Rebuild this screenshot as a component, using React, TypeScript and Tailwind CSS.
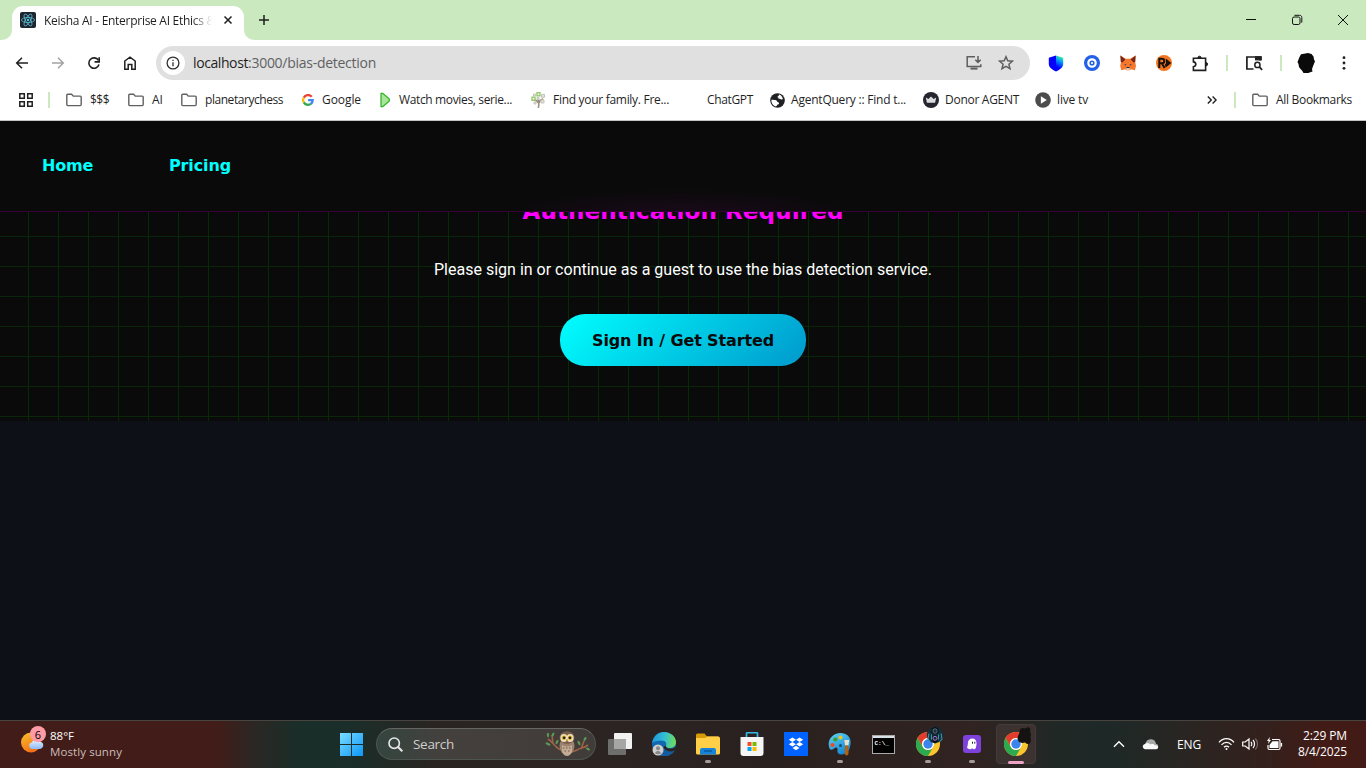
import { useLayoutEffect, useRef, type ReactNode } from "react";

const uiFont = "font-['Open_Sans','Noto_Sans',sans-serif]";
const wideFont = "font-['DejaVu_Sans',sans-serif] font-bold";

/** Text that spreads its letters so that the line is exactly `width` pixels wide. */
function FitText({ width, className = "", children }: { width: number; className?: string; children: ReactNode }) {
  const ref = useRef<HTMLSpanElement>(null);
  useLayoutEffect(() => {
    const el = ref.current;
    if (!el) return;
    el.style.letterSpacing = "0px";
    const natural = el.getBoundingClientRect().width;
    const count = (el.textContent ?? "").length || 1;
    el.style.letterSpacing = `${(width - natural) / count}px`;
  }, [width, children]);
  return (
    <span ref={ref} className={`shrink-0 whitespace-nowrap ${className}`}>
      {children}
    </span>
  );
}

function ReactMark() {
  return (
    <svg width="16" height="16" viewBox="0 0 16 16" className="shrink-0">
      <rect width="16" height="16" rx="2" fill="#20242c" />
      <g fill="none" stroke="#58c4dc" strokeWidth=".75">
        <ellipse cx="8" cy="8" rx="6.6" ry="2.5" />
        <ellipse cx="8" cy="8" rx="6.6" ry="2.5" transform="rotate(60 8 8)" />
        <ellipse cx="8" cy="8" rx="6.6" ry="2.5" transform="rotate(120 8 8)" />
      </g>
      <circle cx="8" cy="8" r="1.2" fill="#58c4dc" />
    </svg>
  );
}

function TabStrip() {
  return (
    <div className="flex h-10 bg-[#cae9bf]">
      <div className="flex w-3 items-end bg-white">
        <div className="h-full w-3 rounded-br-[10px] bg-[#cae9bf]" />
      </div>
      <div className="flex w-[232px] flex-col bg-[#cae9bf]">
        <div className="mt-1.5 flex h-[34px] items-center rounded-t-[11px] bg-white pb-1.5 pl-2">
          <ReactMark />
          <div className="ml-2 mt-px w-[172px] overflow-hidden whitespace-nowrap text-[12px] leading-4 text-[#1f1f1f] [mask-image:linear-gradient(to_right,black_148px,transparent_168px)]">
            <FitText width={171}>Keisha AI - Enterprise AI Ethics &amp;</FitText>
          </div>
          <svg width="10" height="10" viewBox="0 0 10 10" className="ml-[7px]" stroke="#1f1f1f" strokeWidth="1.5">
            <path d="M1.5 1.5l7 7M8.5 1.5l-7 7" />
          </svg>
        </div>
      </div>
      <div className="w-[10px] bg-white">
        <div className="h-full w-full rounded-bl-[10px] bg-[#cae9bf]" />
      </div>
      <svg width="12" height="12" viewBox="0 0 12 12" className="ml-1 mt-3.5" stroke="#1f1f1f" strokeWidth="1.5">
        <path d="M6 1v10M1 6h10" />
      </svg>
      <div className="ml-auto flex items-center">
        <div className="flex w-[46px] justify-center">
          <svg width="12" height="12" viewBox="0 0 12 12" stroke="#111" fill="none">
            <path d="M1 5.5h10" />
          </svg>
        </div>
        <div className="flex w-[46px] justify-center">
          <svg width="12" height="12" viewBox="0 0 12 12" stroke="#111" fill="none">
            <rect x="1.5" y="3" width="7.5" height="7.500" rx="1.6" />
            <path d="M3.400 1.300h5.200c1.300 0 2.200.9 2.200 2.200v5.200" />
          </svg>
        </div>
        <div className="flex w-[46px] justify-center">
          <svg width="12" height="12" viewBox="0 0 12 12" stroke="#111" fill="none">
            <path d="M1 1l10 10M11 1L1 11" />
          </svg>
        </div>
      </div>
    </div>
  );
}

function Slot({ className = "w-9", children }: { className?: string; children: ReactNode }) {
  return <div className={`flex shrink-0 items-center justify-center ${className}`}>{children}</div>;
}

function Toolbar() {
  return (
    <div className="flex h-[46px] items-center pl-1">
      <Slot>
        <svg width="14" height="14" viewBox="0 0 14 14" fill="none" stroke="#1f1f1f" strokeWidth="1.5">
          <path d="M13 7H2M7 1.700L1.700 7 7 12.300" />
        </svg>
      </Slot>
      <Slot>
        <svg width="14" height="14" viewBox="0 0 14 14" fill="none" stroke="#a3a3a3" strokeWidth="1.5">
          <path d="M1 7h11M7 1.700L12.300 7 7 12.300" />
        </svg>
      </Slot>
      <Slot>
        <svg width="14" height="14" viewBox="0 0 14 14" fill="none" stroke="#1f1f1f" strokeWidth="1.600">
          <path d="M12 8.600A5.200 5.200 0 1 1 11.400 4.200" />
          <path d="M12.200 1.200v4.700H7.600" />
        </svg>
      </Slot>
      <Slot>
        <svg width="14" height="16" viewBox="0 0 14 16" fill="none" stroke="#1f1f1f" strokeWidth="1.500">
          <path d="M1.800 6L7 2.100 12.200 6v8.200H8.800V9.500H5.200v4.700H1.800z" />
        </svg>
      </Slot>
      <div className="ml-2 flex h-[34px] w-[874px] items-center rounded-full bg-[#e0e0e0] pl-[5px]">
        <div className="flex size-6 items-center justify-center rounded-full bg-white">
          <svg width="14" height="14" viewBox="0 0 14 14" fill="none" stroke="#303030" strokeWidth="1.300">
            <circle cx="7" cy="7" r="5.900" />
            <path d="M7 6.300v4M7 3.700v1.400" />
          </svg>
        </div>
        <div className="ml-2 flex text-[14px] leading-5">
          <FitText width={55} className="text-[#1f1f1f]">localhost</FitText>
          <FitText width={128} className="text-[#5f6063]">:3000/bias-detection</FitText>
        </div>
        <svg width="16" height="16" viewBox="0 0 16 16" className="ml-auto" fill="none" stroke="#5e5e5e" strokeWidth="1.500">
          <path d="M9 1.800H1.200v9.700h13.600V9.300M12 1v6.200M9.300 4.700L12 7.400l2.700-2.700" />
          <path d="M4.500 13.600h7" strokeWidth="2" />
        </svg>
        <svg width="16" height="16" viewBox="0 0 16 16" className="ml-4 mr-4" fill="none" stroke="#5e5e5e" strokeWidth="1.500">
          <path d="M8 1.700l1.800 4.100 4.600.4-3.500 3 1.100 4.500L8 11.300l-4 2.400 1.100-4.500-3.500-3 4.600-.4z" />
        </svg>
      </div>
      <Slot className="ml-2 w-9 pr-px">
        <svg width="16" height="17" viewBox="0 0 16 17">
          <linearGradient id="shield" gradientUnits="userSpaceOnUse" x1="15" y1="1" x2="8" y2="15">
            <stop offset=".05" stopColor="#48ff91" />
            <stop offset=".4" stopColor="#0094ff" />
            <stop offset=".8" stopColor="#0500ff" />
          </linearGradient>
          <path d="M8 .5L.8 2.800v6c0 3.500 3 5.800 7.200 7.700z" fill="#0500ff" />
          <path d="M8 .5l7.200 2.300v6c0 3.500-3 5.800-7.200 7.700z" fill="url(#shield)" />
        </svg>
      </Slot>
      <Slot>
        <svg width="16" height="16" viewBox="0 0 16 16">
          <circle cx="8" cy="8" r="8" fill="#2360e8" />
          <circle cx="8" cy="8" r="3.700" fill="#2360e8" stroke="#fff" strokeWidth="2.200" />
          <circle cx="8" cy="8" r="1.100" fill="#fff" />
        </svg>
      </Slot>
      <Slot>
        <svg width="16" height="16" viewBox="0 0 16 16">
          <path d="M.4.500l5.400 3.200h4.400L15.600.500l-.4 6.500.8 4-1.100 4.300-4-1-1.200 1H6.500l-1.200-1-4 1L.2 11 1 7z" fill="#f5782c" />
          <path d="M.4.500l5 4.100-3 3-1.600-.6zM15.600.500l-5 4.100 3 3 1.600-.6z" fill="#76261a" />
          <path d="M4 9l2.300.4-.4 1.300zM12 9l-2.300.4.4 1.300z" fill="#24335a" />
          <path d="M6 12.300h4l-.5 2.700h-3z" fill="#d8c8bb" />
          <path d="M6.400 12h3.200v1H6.400z" fill="#30211d" />
        </svg>
      </Slot>
      <Slot>
        <svg width="16" height="16" viewBox="0 0 16 16">
          <circle cx="8" cy="8" r="8" fill="#f3761f" />
          <path d="M3.300 13V3.800h2.500c3.300 0 3.300 4.300.2 4.500H4M6 8.500L8.600 13" fill="none" stroke="#17110d" strokeWidth="2" />
          <path d="M9.800 3.500L15.300 8l-5.500 4.500-1-2.700 1.300-1.600z" fill="#17110d" />
        </svg>
      </Slot>
      <Slot>
        <svg width="17" height="17" viewBox="0 0 17 17" fill="none" stroke="#1f1f1f" strokeWidth="1.600">
          <path d="M1.400 3.200h12.200v12.200H1.400v-3.700c3.200-.4 3.200-4.400 0-4.800z" />
          <path d="M5.900 2.800a1.600 1.600 0 0 1 3.200 0zM14 7.600a1.600 1.600 0 0 1 0 3.200z" fill="#1f1f1f" strokeWidth="1" />
        </svg>
      </Slot>
      <div className="ml-2 h-4 w-0.5 bg-[#cae9bf]" />
      <Slot className="ml-2 w-9">
        <svg width="18" height="16" viewBox="0 0 18 16" fill="none" stroke="#1f1f1f" strokeWidth="1.700">
          <path d="M8.500 14H1.900V2h13.200v3.500" />
          <path d="M10 1.200h6.900v4.200H10z" fill="#1f1f1f" stroke="none" />
          <circle cx="12.400" cy="9.900" r="2.600" strokeWidth="1.500" />
          <path d="M14.300 11.800l2.800 3" />
        </svg>
      </Slot>
      <div className="ml-2 h-4 w-0.5 bg-[#cae9bf]" />
      <Slot className="ml-1.5 w-9">
        <svg width="18" height="20" viewBox="0 0 18 20">
          <path d="M2.500 4L4 1.200 7 .8l4-.8 3.500 1 2 2.500.5 3 1 1.700-1 2.500-1.200 3-.8 2.500.5 2.300-3 1-1 .5H6.500L5 17.500 3.500 16 2 14l-.5-3L.5 9l.8-2z" fill="#0b0a0b" />
        </svg>
      </Slot>
      <Slot className="ml-0.5 w-9">
        <svg width="4" height="16" viewBox="0 0 4 16" fill="#1f1f1f">
          <circle cx="2" cy="2.700" r="1.400" />
          <circle cx="2" cy="8" r="1.400" />
          <circle cx="2" cy="13.300" r="1.400" />
        </svg>
      </Slot>
    </div>
  );
}

function FolderIcon() {
  return (
    <svg width="16" height="14" viewBox="0 0 16 14" className="shrink-0" fill="none" stroke="#606060" strokeWidth="1.400">
      <path d="M.8 11.600V2.200q0-1 1-1h3.800l1.700 1.900h6.900q1 0 1 1v7.500q0 1-1 1H1.800q-1 0-1-1z" />
    </svg>
  );
}

function GoogleIcon() {
  return (
    <svg width="12" height="12" viewBox="0 0 12 12" className="shrink-0" fill="none" strokeWidth="2.300">
      <path d="M9.700 2.700A4.850 4.850 0 0 0 1.800 3.600" stroke="#ea4335" />
      <path d="M1.800 3.600a4.850 4.850 0 0 0 0 4.800" stroke="#fbbc05" />
      <path d="M1.800 8.400a4.850 4.850 0 0 0 7.300 1.300" stroke="#34a853" />
      <path d="M9 9.800c1.200-1 1.700-2.200 1.700-3.700H6.100" stroke="#4285f4" />
    </svg>
  );
}

function BookmarkBar() {
  return (
    <div className="flex h-[34px] items-center border-b border-[#c4c4c4] pb-[7px] pl-[19px] text-[12px] leading-4 text-[#1f1f1f]">
      <svg width="14" height="14" viewBox="0 0 14 14" fill="none" stroke="#1f1f1f" strokeWidth="1.500">
        <path d="M.8.8h4.500v4.500H.8zM8.700.8h4.500v4.500H8.700zM.8 8.700h4.500v4.500H.8zM8.700 8.700h4.500v4.500H8.700z" />
      </svg>
      <div className="ml-[15px] h-4 w-0.5 bg-[#cae9bf]" />
      <div className="ml-4 flex items-center gap-2">
        <FolderIcon />
        <FitText width={19}>$$$</FitText>
      </div>
      <div className="ml-[19px] flex items-center gap-2">
        <FolderIcon />
        <FitText width={11}>AI</FitText>
      </div>
      <div className="ml-[18px] flex items-center gap-2">
        <FolderIcon />
        <FitText width={78}>planetarychess</FitText>
      </div>
      <div className="ml-[19px] flex items-center gap-2">
        <GoogleIcon />
        <FitText width={39}>Google</FitText>
      </div>
      <div className="ml-[19px] flex items-center gap-2">
        <svg width="11" height="16" viewBox="0 0 11 16">
          <path d="M1 1.500Q2 .8 3.200 1.800L8.800 6.500Q10.200 8 8.800 9.500L3.200 14.200Q2 15.200 1 14.500z" fill="#a8e59a" stroke="#38b52f" strokeWidth="1.300" />
        </svg>
        <FitText width={113}>Watch movies, serie...</FitText>
      </div>
      <div className="ml-[19px] flex items-center gap-[7px]">
        <svg width="15" height="16" viewBox="0 0 15 16" fill="none">
          <path d="M7.300 16c.8-4 .8-6 0-9M7.800 11c1-2.500 2.500-3.500 4.500-4M7.400 11C6.500 9 5 8 3 8" stroke="#9d8f7b" strokeWidth="1.600" />
          <path d="M6 .8h3v3H6zM1 5.300h3v3H1z" stroke="#98ca70" strokeWidth="1.400" />
          <path d="M10.500 2.300h3v3h-3zM10 8h3v3h-3zM2.500 2h2v2h-2zM3 10h2v2H3zM6 5.500h2v2H6z" fill="#e1e1dc" stroke="#c5c5c0" />
        </svg>
        <FitText width={116}>Find your family. Fre...</FitText>
      </div>
      <FitText width={46} className="ml-[38px]">ChatGPT</FitText>
      <div className="ml-[17px] flex items-center gap-1.5">
        <svg width="15" height="15" viewBox="0 0 15 15">
          <circle cx="7.500" cy="7.500" r="7.300" fill="#202124" />
          <path d="M1.500 6.800c2 .3 4.100-.2 5 .8.900 1 .4 1.500 2.200 1.800 1 1.200-.2 2-1.500 2.300-.3 1-1 1.600-1.500 1.800-2.600-1-4.700-3.400-4.200-6.700zM9 1.500c.2 1.200-1.100 1.800-1.800 2.600.7.300 1.300.7 1.500 1.600 1 .3 2 .2 2.500.8 1 .3 1.400-.2 1.700-.8C12.200 3.500 11 2 9 1.500z" fill="#fff" />
        </svg>
        <FitText width={115}>AgentQuery :: Find t...</FitText>
      </div>
      <div className="ml-[17px] flex items-center gap-1.5">
        <svg width="16" height="16" viewBox="0 0 16 16">
          <circle cx="8" cy="8" r="8" fill="#252530" />
          <path d="M2.800 5.400l2.600 1.500L8 4.400l2.600 2.500 2.600-1.500-1.100 5.400H3.900z" fill="#dcdce0" />
        </svg>
        <FitText width={74}>Donor AGENT</FitText>
      </div>
      <div className="ml-4 flex items-center gap-1.5">
        <svg width="16" height="16" viewBox="0 0 16 16">
          <circle cx="8" cy="8" r="7.800" fill="#4c4c4c" />
          <path d="M5.900 4.200L11.800 8l-5.900 3.800z" fill="#fff" />
        </svg>
        <FitText width={31}>live tv</FitText>
      </div>
      <svg width="10" height="8" viewBox="0 0 10 8" className="ml-auto" fill="none" stroke="#1f1f1f" strokeWidth="1.400">
        <path d="M.8.500L4.300 4 .8 7.500M5.600.500L9.100 4 5.600 7.500" />
      </svg>
      <div className="ml-[17px] h-4 w-0.5 bg-[#cae9bf]" />
      <div className="ml-4 mr-[14px] flex items-center gap-2">
        <FolderIcon />
        <FitText width={76}>All Bookmarks</FitText>
      </div>
    </div>
  );
}

function WebPage() {
  return (
    <div className="flex min-h-0 flex-1 flex-col bg-[#0d1117]">
      <nav className={`flex h-[91px] shrink-0 items-center border-b border-[#350035] bg-[#0a0a0a] bg-[radial-gradient(ellipse_180px_28px_at_683px_95px,#1b0a1b,transparent)] pl-[42px] text-[16px] leading-6 text-[#00ffff] ${wideFont}`}>
        <div className="flex gap-[76px] pb-px">
          <FitText width={51}>Home</FitText>
          <FitText width={62}>Pricing</FitText>
        </div>
      </nav>
      <main className="flex h-[209px] shrink-0 flex-col items-center overflow-hidden bg-[#0a0a0a] bg-[linear-gradient(90deg,transparent_28px,#042b04_28px,#042b04_29px,transparent_29px),linear-gradient(180deg,transparent_24px,#0a260a_24px,#0a260a_25px,transparent_25px)] bg-[size:30px_30px]">
        <h1 className={`-mt-[17px] h-8 text-[23px] leading-8 text-[#ff00ff] ${wideFont}`}>
          <FitText width={321}>Authentication Required</FitText>
        </h1>
        <p className="mt-[31px] font-[Roboto,sans-serif] text-[16px] leading-6 text-white">
          <FitText width={498}>Please sign in or continue as a guest to use the bias detection service.</FitText>
        </p>
        <button className={`mt-8 flex h-[52px] w-[246px] shrink-0 items-center justify-center rounded-[25px] bg-[linear-gradient(135deg,#00ffff,#0099cc)] pt-0.5 text-[16px] text-[#0a0a0a] ${wideFont}`}>
          <FitText width={182}>Sign In / Get Started</FitText>
        </button>
      </main>
    </div>
  );
}

function ChromeIcon() {
  return (
    <svg width="24" height="24" viewBox="0 0 24 24">
      <circle cx="12" cy="12" r="12" fill="#fbc52d" />
      <path d="M12 0a12 12 0 0 1 10.400 6H12a6 6 0 0 0-5.200 9L1.600 6A12 12 0 0 1 12 0z" fill="#e33b2e" />
      <path d="M1.600 6A12 12 0 0 0 12 24l5.200-9A6 6 0 0 1 6.800 15z" fill="#2da94f" />
      <circle cx="12" cy="12" r="6" fill="#fff" />
      <circle cx="12" cy="12" r="4.700" fill="#3b83ed" />
    </svg>
  );
}

function TaskSlot({ running = false, children }: { running?: boolean; children: ReactNode }) {
  return (
    <div className="relative flex h-12 w-11 shrink-0 items-center justify-center">
      {children}
      {running && <div className="absolute bottom-[5px] left-[19px] h-[3px] w-1.5 rounded-full bg-[#a49c99]" />}
    </div>
  );
}

function Owl() {
  return (
    <svg width="46" height="26" viewBox="0 0 46 26" fill="none">
      <path d="M3 8c5 3 6 7 11 10 6 3 13 4 18 1 4-3 6-1 11-5M8 13L7 4M36 18l3-8" stroke="#9a6246" strokeWidth="1.700" />
      <g fill="#5c9a55">
        <ellipse cx="3" cy="4" rx="1.100" ry="2.200" />
        <ellipse cx="8" cy="3.500" rx="1.100" ry="2.200" transform="rotate(25 8 3.500)" />
        <ellipse cx="3" cy="13" rx="2.600" ry="1.200" transform="rotate(25 3 13)" />
        <ellipse cx="12" cy="11" rx="1.200" ry="2.300" transform="rotate(30 12 11)" />
        <ellipse cx="34" cy="12" rx="1.200" ry="2.400" transform="rotate(-25 34 12)" />
        <ellipse cx="40" cy="8" rx="1.200" ry="2.200" transform="rotate(30 40 8)" />
        <ellipse cx="43" cy="18" rx="2.200" ry="1.100" transform="rotate(30 43 18)" />
      </g>
      <ellipse cx="22" cy="15" rx="7.500" ry="9" fill="#9c8370" />
      <path d="M17 14q5 3 10 0v7q-2 4-5 4t-5-4z" fill="#c3aa92" />
      <ellipse cx="22" cy="6.500" rx="7.500" ry="6.300" fill="#765e4d" />
      <ellipse cx="18.900" cy="7" rx="3.500" ry="4" fill="#f1dfb6" />
      <ellipse cx="25.100" cy="7" rx="3.500" ry="4" fill="#f1dfb6" />
      <circle cx="18.900" cy="6.800" r="2.200" fill="#e3bd32" />
      <circle cx="25.100" cy="6.800" r="2.200" fill="#e3bd32" />
      <circle cx="19.100" cy="6.800" r="1.400" fill="#22201d" />
      <circle cx="24.900" cy="6.800" r="1.400" fill="#22201d" />
      <path d="M21 8.500h2l-1 3z" fill="#bd7d36" />
      <path d="M18 17h1.500M21 17h1.500M24 17h1.500M19.500 20h1.500M23 20h1.500" stroke="#73594d" />
    </svg>
  );
}

function Taskbar() {
  return (
    <div className="flex h-12 shrink-0 items-start bg-[linear-gradient(90deg,#421c18_0,#421c18_215px,#2b2724_255px,#192e29_300px,#1b2e29_350px,#292422_435px,#2c2422_620px,#29211f_760px,#2e2220_880px,#302321_975px,#202826_1060px,#1e2927_1110px,#2a2522_1190px,#34201c_1270px,#431b16_1325px,#431b16_100%)] shadow-[inset_0_1px_0_#484440] text-white">
      <div className="flex w-[329px] pl-5">
        <div className="relative mt-1.5 size-[30px] shrink-0">
          <svg width="30" height="30" viewBox="0 0 30 30">
            <defs>
              <linearGradient id="sun" x1="0" y1="0" x2=".5" y2="1">
                <stop stopColor="#f8c42c" />
                <stop offset="1" stopColor="#f36f16" />
              </linearGradient>
              <linearGradient id="haze" x1="0" y1="0" x2="0" y2="1">
                <stop stopColor="#e8f1ff" />
                <stop offset="1" stopColor="#8cb8f4" />
              </linearGradient>
            </defs>
            <circle cx="11" cy="16.500" r="10" fill="url(#sun)" />
            <path d="M12 23a3.300 3.300 0 0 1-.2-6.500C13 13.500 18 12.500 20 16c4-.6 4.700 6 0 7z" fill="url(#haze)" />
          </svg>
          <div className="absolute left-[10px] top-0 flex size-4 items-center justify-center rounded-full bg-[#ff9ba6] text-[11px] leading-none text-black">6</div>
        </div>
        <div className="mt-2 flex flex-col text-[11.5px] leading-4">
          <FitText width={24} className="self-start">88°F</FitText>
          <FitText width={72} className="self-start text-[#cbbebb]">Mostly sunny</FitText>
        </div>
      </div>
      <TaskSlot>
        <svg width="23" height="23" viewBox="0 0 23 23">
          <linearGradient id="win" gradientUnits="userSpaceOnUse" x1="0" y1="0" x2="23" y2="23">
            <stop stopColor="#7bdcff" />
            <stop offset="1" stopColor="#0b96f8" />
          </linearGradient>
          <path d="M0 0h11v11H0zM12 0h11v11H12zM0 12h11v11H0zM12 12h11v11H12z" fill="url(#win)" />
        </svg>
      </TaskSlot>
      <div className="ml-[3px] mt-2 flex h-8 w-[220px] items-center rounded-full border border-[#4d5550] border-t-[#666764] bg-[linear-gradient(90deg,#34453f,#44403e_30%,#413c39)] pl-[11px] pr-1">
        <svg width="15" height="15" viewBox="0 0 15 15" fill="none" stroke="#e8e8e8" strokeWidth="1.600">
          <circle cx="6.200" cy="6.200" r="5.200" />
          <path d="M10 10l4.300 4.300" strokeWidth="2" />
        </svg>
        <FitText width={41} className="ml-[10px] text-[13.500px] text-[#d0ceca]">Search</FitText>
        <div className="ml-auto">
          <Owl />
        </div>
      </div>
      <div className="ml-[2px] flex">
        <TaskSlot>
          <svg width="24" height="22" viewBox="0 0 24 22">
            <rect x="6" width="18" height="16" rx="1" fill="#f1f1f1" />
            <path d="M0 7q0-1 1-1h16q1 0 1 1v14q0 1-1 1H1q-1 0-1-1z" fill="#6e6e6d" />
            <path d="M6 6h11q1 0 1 1v9H6z" fill="#a6a6a5" />
          </svg>
        </TaskSlot>
        <TaskSlot>
          <svg width="24" height="24" viewBox="0 0 24 24">
            <defs>
              <linearGradient id="edge" x1="0" y1=".3" x2="1" y2=".4">
                <stop stopColor="#2095d8" />
                <stop offset=".5" stopColor="#32bdd5" />
                <stop offset="1" stopColor="#6edc5b" />
              </linearGradient>
            </defs>
            <circle cx="12" cy="12" r="12" fill="#1268b1" />
            <path d="M.1 11C1 4.500 6 0 12 0s12 4.300 12 10c0 4-3 6-6.500 6-3 0-4.500-1-3.500-2.500 1-2-.4-5-4.500-5-4 0-7.800 1-9.400 2.500z" fill="url(#edge)" />
            <path d="M11 12c-1 5 4 8 10 6.500l2-.5c-2 4-6 6-10 6-5-1-7-9-2-12z" fill="#145a9e" />
            <path d="M13.700 13.500c.4 3.300 4.800 4.200 10 1.500l.3 1.500-1.500 2c-4 2-10 .5-11-3.500z" fill="#2a2523" />
            <circle cx="6" cy="18" r="5.500" fill="#cfcfcf" />
            <circle cx="6" cy="16.300" r="2" fill="#888" />
            <path d="M2.600 21.200q3.400-5 6.800 0-3.400 2-6.800 0z" fill="#888" />
          </svg>
        </TaskSlot>
        <TaskSlot running>
          <svg width="24" height="22" viewBox="0 0 24 22">
            <path d="M0 2Q0 .5 1.500.5h7L11 3.500H22q1.500 0 1.500 1.500v8H0z" fill="#d99a08" />
            <path d="M0 5h9l2-1.500h11q2 0 2 2V20q0 1.500-1.500 1.500h-21Q0 21.500 0 20z" fill="#ffcf48" />
            <path d="M4 21.500V17q0-2 2-2h12q2 0 2 2v4.500z" fill="#1683d8" />
            <path d="M8 18h8" stroke="#0a589f" strokeWidth="1.500" />
          </svg>
        </TaskSlot>
        <TaskSlot>
          <svg width="24" height="24" viewBox="0 0 24 24">
            <path d="M6.500 6V1.700q0-1 1-1h9q1 0 1 1V6" fill="none" stroke="#35b7e8" strokeWidth="1.700" />
            <path d="M.5 5h23v16q0 3-3 3h-17q-3 0-3-3z" fill="#f5f5f5" />
            <path d="M7.500 10h4v4h-4z" fill="#f05024" />
            <path d="M12.500 10h4v4h-4z" fill="#7db900" />
            <path d="M7.500 15h4v4h-4z" fill="#05a5ef" />
            <path d="M12.500 15h4v4h-4z" fill="#ffb901" />
          </svg>
        </TaskSlot>
        <TaskSlot>
          <svg width="24" height="24" viewBox="0 0 24 24">
            <path d="M0 0h24v24H0z" fill="#0062ff" />
            <path d="M8.400 5.500L12 7.700 8.400 10 4.800 7.700zM15.600 5.500l3.600 2.200-3.600 2.300L12 7.700zM8.400 10l3.600 2.300-3.600 2.300-3.600-2.300zM15.600 10l3.600 2.300-3.600 2.300-3.600-2.300zM12 13.800l3.500 2.200-3.500 2.200L8.500 16z" fill="#fff" />
          </svg>
        </TaskSlot>
        <TaskSlot running>
          <svg width="24" height="24" viewBox="0 0 24 24">
            <linearGradient id="paint" x1="0" y1="0" x2=".5" y2="1">
              <stop stopColor="#62d5f2" />
              <stop offset="1" stopColor="#188ad5" />
            </linearGradient>
            <path d="M1.500 16.500C-1.500 9 4 1 12.500 1 19 1 23.500 5.500 22.500 12c-.7 5-2 10-8.500 10.500-4 .2-5-2.500-4.500-4.500.4-2-1-3-2.500-2-2 1.300-4 3-5.500.5z" fill="url(#paint)" />
            <circle cx="4.500" cy="13" r="2.100" fill="#e84e2c" />
            <circle cx="7.300" cy="7.500" r="2.100" fill="#3c9c27" />
            <circle cx="12.500" cy="5.500" r="2" fill="#f3c324" />
            <circle cx="12.500" cy="13.500" r="1.500" fill="#174e70" />
            <path d="M16.300 8h4.900l-.8 5.500h-3.300z" fill="#ece0ca" />
            <path d="M17 13.500h3.300l.2 8.500q-2 3-3.700 0z" fill="#af620f" />
          </svg>
        </TaskSlot>
        <TaskSlot>
          <div className="mr-0.5 flex h-[19px] w-[23px] flex-col border border-[#aaa] bg-black">
            <div className="h-[2px] bg-[#d9e1e8]" />
            <div className="pl-[2px] pt-[2px] font-['Liberation_Mono',monospace] text-[6px] font-bold leading-[7px]">C:\_</div>
          </div>
        </TaskSlot>
        <TaskSlot running>
          <ChromeIcon />
          <svg width="18" height="18" viewBox="0 0 18 18" className="absolute left-5 top-[6px]">
            <circle cx="9" cy="9" r="8.200" fill="#13303c" />
            <path d="M5.500 2.500L9 .8l3.500 1.700v4l-3.500 2-3.500-2z" fill="#081218" />
            <path d="M7 3.500l2-.8 2 .8v2.700L9 7.500 7 6.200z" fill="#26303a" stroke="#7198a4" strokeWidth=".6" />
            <path d="M3 7.500L2 13l2 2.500M15 7.500l1 5.500-2 2.500M5.500 8.500v5M12.500 8.500v5" fill="none" stroke="#3c96ab" strokeWidth="1.100" />
            <path d="M6.500 9.500h5v6l-2.500 2-2.500-2z" fill="#091017" />
            <circle cx="9" cy="12.300" r="2" fill="#182a35" stroke="#b282dd" strokeWidth=".9" />
          </svg>
        </TaskSlot>
        <TaskSlot running>
          <svg width="18" height="18" viewBox="0 0 18 18">
            <rect width="18" height="18" rx="3" fill="#7d42dc" />
            <path d="M4.500 13.200c-1-1 .4-2 .4-5C5 5 6.900 3.500 9.200 3.500c2.700 0 4.300 2 4.300 4.800 0 3.200-.8 6-2.200 6-1 0-1-.8-2-.8-.8 0-1 .8-2 .8s-2-.4-2.800-1.100z" fill="#fff" />
            <path d="M9.500 6.700v2M11.800 6.700v2" stroke="#262238" strokeWidth="1" />
          </svg>
        </TaskSlot>
        <div className="relative mx-0.5 mt-1 flex size-10 items-center justify-center rounded border border-[#443c3a] bg-[#3c3331]">
          <ChromeIcon />
          <svg width="15" height="17" viewBox="0 0 15 17" className="absolute left-5 top-[2px]">
            <path d="M3 2.500l2-1.500 3 .5 3-1.500 2.500 2L13 5l1 2-.5 3 .5 3-1 3.500-3 .5-2-1.500-3 .5-3-1-1.500-3 .5-3L2 7z" fill="#151212" />
          </svg>
          <div className="absolute -bottom-px left-[11px] h-[3px] w-4 rounded-full bg-[#eda3c7]" />
        </div>
      </div>
      <div className="ml-auto flex h-12 items-center pr-[19px]">
        <svg width="12" height="8" viewBox="0 0 12 8" fill="none" stroke="#fff" strokeWidth="1.400">
          <path d="M1 6.700l5-5 5 5" />
        </svg>
        <svg width="17" height="12" viewBox="0 0 18 12" className="ml-[17px]">
          <path d="M4 7C3 4 6 1 9 1s5 1 6 5c2 0 2.500 2 2 4H3z" fill="#a8aaa9" />
          <path d="M3.500 11.500C.5 11.500-.4 7 3 6c2.500-2 5-.6 6 .5 2-1 4-.5 4.500 1 2-.5 3.500.5 3.500 2s-1 2-2 2z" fill="#f9f9f9" />
        </svg>
        <FitText width={24} className="ml-[18px] mt-px text-[12px]">ENG</FitText>
        <svg width="17" height="14" viewBox="0 0 17 14" className="ml-[17px]" fill="none" stroke="#fff" strokeWidth="1.300">
          <path d="M1 5.400c4-5 11-5 15 0M3.500 7.900c3-3.300 7-3.300 10 0M6 10.200c1.700-1.500 3.300-1.500 5 0" />
          <circle cx="8.500" cy="12" r="1" fill="#fff" stroke="none" />
        </svg>
        <svg width="17" height="14" viewBox="0 0 17 14" className="ml-[7px]" fill="none" stroke="#fff" strokeWidth="1.200">
          <path d="M.7 5v4h2.500L7 12V2L3.200 5zM9 5c1 1 1 3 0 4M11 3c2 2 2 6 0 8" />
          <path d="M13.300 1.500c3 3 3 8 0 11" stroke="#776865" />
        </svg>
        <svg width="17" height="14" viewBox="0 0 17 14" className="ml-[7px]" fill="none" stroke="#fff" strokeWidth="1.200">
          <path d="M6 2.500h6.500q1.500 0 1.500 1.500v7q0 1.500-1.500 1.500h-9Q2 12.500 2 11V8M15.500 6v3.500" />
          <path d="M3.500 11V8L6.500 4.200h6V11z" fill="#fff" stroke="none" />
          <path d="M3.800 0L1 4h1.700L2 7l3-4H3.400z" fill="#fff" stroke="none" />
        </svg>
        <div className="ml-[14px] flex w-[50px] flex-col items-end text-[12px] leading-4">
          <FitText width={44}>2:29 PM</FitText>
          <FitText width={49}>8/4/2025</FitText>
        </div>
      </div>
    </div>
  );
}

export default function App() {
  return (
    <div className={`flex h-screen w-full flex-col overflow-hidden bg-white ${uiFont}`}>
      <TabStrip />
      <Toolbar />
      <div className="h-px shrink-0" />
      <BookmarkBar />
      <WebPage />
      <Taskbar />
    </div>
  );
}
